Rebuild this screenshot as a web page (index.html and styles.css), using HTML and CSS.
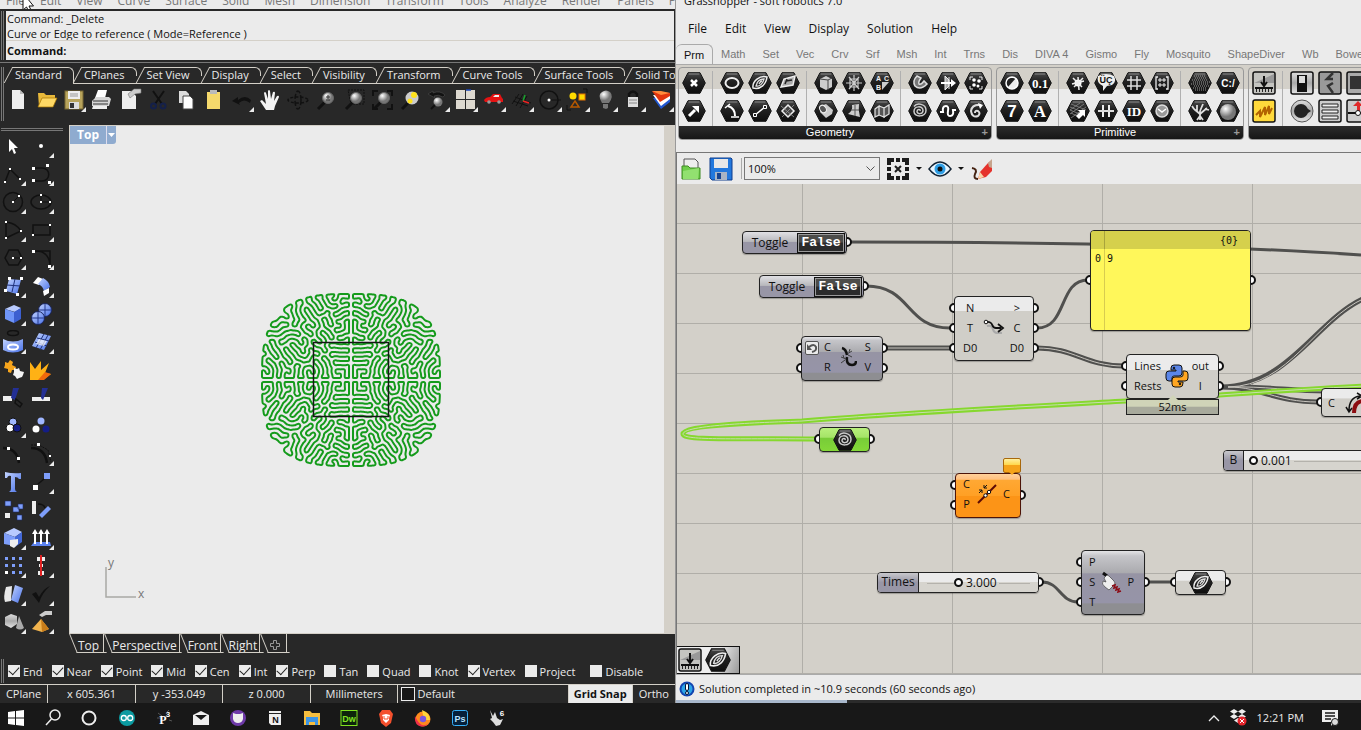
FILE: index.html
```html
<!DOCTYPE html>
<html lang="en">
<head>
<meta charset="utf-8">
<title>Rhino and Grasshopper</title>
<link rel="stylesheet" href="styles.css">
</head>
<body>
<svg class="defs" aria-hidden="true">
  <defs>
    <linearGradient id="gHex" x1="0" y1="0" x2="0" y2="1"><stop offset="0" stop-color="#4a4a4a"/><stop offset=".4" stop-color="#222"/><stop offset="1" stop-color="#0e0e0e"/></linearGradient>
    <linearGradient id="gBlue" x1="0" y1="0" x2="1" y2="1"><stop offset="0" stop-color="#c3d4ff"/><stop offset="1" stop-color="#4a72e8"/></linearGradient>
    <linearGradient id="gGrey" x1="0" y1="0" x2="0" y2="1"><stop offset="0" stop-color="#ddd"/><stop offset=".5" stop-color="#aaa"/><stop offset="1" stop-color="#e4e4e4"/></linearGradient>
    <radialGradient id="gBall" cx=".35" cy=".3"><stop offset="0" stop-color="#fff"/><stop offset="1" stop-color="#777"/></radialGradient>
    <symbol id="hex" viewBox="0 0 24 22"><path d="M6 .7h12l5.300 10.300-5.300 10.300H6L.7 11z" fill="url(#gHex)" stroke="#151515"/><path d="M6.700 2h10.600" stroke="#888"/></symbol>
    <symbol id="spiral" viewBox="0 0 24 22"><path d="M12 11c1-2-3-2-3 .5 0 3 6 3 6-1 0-5-9-5-9 1 0 6 12 6 12-1 0-7-9-8-12-4" fill="none" stroke="#ccc" stroke-width="1.500"/></symbol>
    <symbol id="curve" viewBox="0 0 24 22"><path d="M5 16C4 9 12 3 19 5c-1 7-6 13-14 11z" fill="none" stroke="#eee" stroke-width="1.500"/><path d="M8 14c1-5 4-7 8-7-1 4-4 8-8 7zM11 12c1-2 2-3 3-3" fill="none" stroke="#ddd" stroke-width="1.300"/></symbol>
    <symbol id="glass" viewBox="0 0 24 24"><path d="M4 21l7-7" stroke="#111" stroke-width="3"/><circle cx="14" cy="10" r="5.500" fill="url(#gBall)" stroke="#666"/></symbol>
    <symbol id="sink" viewBox="0 0 24 24"><rect x="1" y="1" width="22" height="22" rx="2" fill="#c4c4c0" stroke="#111" stroke-width="1.500"/><path d="M2 12L22 3v9z" fill="#999"/><path d="M12 5v9M9 11l3 4 3-4" stroke="#111" stroke-width="2" fill="none"/><path d="M3 17h18" stroke="#111" stroke-width="2"/><path d="M4 19.500h17" stroke="#222" stroke-width="3" stroke-dasharray="1 2"/></symbol>
  </defs>
</svg>

<main class="desktop">
<section class="rhino">
  <nav class="rhino-menu">
    <a href="#">File</a><a href="#">Edit</a><a href="#">View</a><a href="#">Curve</a><a href="#">Surface</a><a href="#">Solid</a><a href="#">Mesh</a><a href="#">Dimension</a><a href="#">Transform</a><a href="#">Tools</a><a href="#">Analyze</a><a href="#">Render</a><a href="#">Panels</a><a href="#">Paneling</a>
    <svg class="cursor" width="14" height="14"><path d="M1-7v17l3.500-3 3 6 2.500-1-3-6h4.500z" fill="#fff" stroke="#111"/></svg>
  </nav>
  <div class="command">
    <div class="history"><p>Command: _Delete</p><p>Curve or Edge to reference ( Mode=Reference )</p></div>
    <label class="prompt">Command:<input type="text"></label>
  </div>
  <div class="toolset">
    <div class="tool-tabs">
      <button class="on">Standard</button><button>CPlanes</button><button>Set View</button><button>Display</button><button>Select</button><button>Visibility</button><button>Transform</button><button>Curve Tools</button><button>Surface Tools</button><button>Solid Tools</button>
    </div>
    <div class="toolbar">
      <button aria-label="New"><svg viewBox="0 0 24 24"><path d="M6 2h8l4 4v15H6z" fill="#eee"/><path d="M14 2v4h4" fill="#bbb"/></svg></button>
      <button aria-label="Open"><svg viewBox="0 0 24 24"><path d="M4 5h6l2 2h9v4H8l-3 8z" fill="#e9b93a"/><path d="M4 19l4-9h15l-4 9z" fill="#ffd965" stroke="#a87400" stroke-width=".7"/></svg></button>
      <button class="more" aria-label="Save"><svg viewBox="0 0 24 24"><rect x="3" y="3" width="18" height="18" fill="#b8a45c" stroke="#776633"/><path d="M6 3h12v8H6z" fill="#eee"/><path d="M8 6h8M8 8h8" stroke="#999"/><path d="M7 14h10v7H7z" fill="#ddd"/><path d="M8 15h4v5H8z" fill="#333"/></svg></button>
      <button aria-label="Print"><svg viewBox="0 0 24 24"><path d="M8 2h9l-2 8H5z" fill="#fff"/><path d="M2 13l4-4h13l2 2-2 7H2z" fill="#d6d6d6"/><path d="M3 13h15M3 16h15" stroke="#333"/><path d="M3 18h14v3H2z" fill="#eee"/></svg></button>
      <button aria-label="Properties"><svg viewBox="0 0 24 24"><path d="M4 3h9l5 5v13H4z" fill="#eee"/><path d="M10 6l6-5h7v4l-6 1-5 4z" fill="#ccc" stroke="#777" stroke-width=".6"/></svg></button>
      <button aria-label="Cut"><svg viewBox="0 0 24 24"><path d="M7 3l9 13M18 3L9 16" stroke="#111" stroke-width="2"/><g fill="none" stroke="#14204a" stroke-width="2"><circle cx="7.500" cy="18" r="2.500"/><circle cx="17" cy="18" r="2.500"/></g></svg></button>
      <button aria-label="Copy"><svg viewBox="0 0 24 24"><path d="M5 3h7l3 3v9H5z" fill="#ddd"/><path d="M9 8h7l3 3v10H9z" fill="#fff" stroke="#444"/></svg></button>
      <button aria-label="Paste"><svg viewBox="0 0 24 24"><rect x="5" y="4" width="13" height="17" fill="#f5d96c"/><rect x="8" y="2" width="7" height="4" fill="#bbb"/></svg></button>
      <button class="more" aria-label="Undo"><svg viewBox="0 0 24 24"><path d="M2 13l6-4v3q7-6 13 0l-1 3q-6-5-11 0l1 2z" fill="#111"/></svg></button>
      <button aria-label="Pan"><svg viewBox="0 0 24 24"><path d="M8 22l-6-9 2-1 4 4L6 5q1-2 2 0l2 6 0-8q1-2 2 0l1 8 2-7q2-1 2 1l-1 8 3-5q2-1 2 1l-4 9-1 4z" fill="#f4f4f4"/></svg></button>
      <button aria-label="Rotate view"><svg viewBox="0 0 24 24" fill="none" stroke="#111" stroke-width="1.500"><ellipse cx="12" cy="12" rx="10" ry="3" stroke-dasharray="3 2"/><ellipse cx="12" cy="12" rx="3" ry="9" stroke-dasharray="5 2"/></svg></button>
      <button aria-label="Zoom dynamic"><svg viewBox="0 0 24 24"><use href="#glass"/><path d="M12 9h4M12 12h4M14 7v4" stroke="#333"/></svg></button>
      <button aria-label="Zoom window"><svg viewBox="0 0 24 24"><path d="M6 2h16v14H9z" fill="none" stroke="#111" stroke-dasharray="2 1"/><use href="#glass"/></svg></button>
      <button aria-label="Zoom extents"><svg viewBox="0 0 24 24"><path d="M3 8V3h5M17 3h5v5M22 16v5h-5M8 21H3v-5" fill="none" stroke="#111" stroke-width="2"/><use href="#glass"/></svg></button>
      <button aria-label="Zoom selected"><svg viewBox="0 0 24 24"><use href="#glass"/><circle cx="14" cy="10" r="6.500" fill="#ccc"/><circle cx="16" cy="7" r="3" fill="#ffe21c"/><circle cx="12" cy="13" r="2.500" fill="#ffe21c"/></svg></button>
      <button class="more" aria-label="Undo view"><svg viewBox="0 0 24 24"><path d="M2 6l5-3v2q7-3 12 2l-2 2Q12 6 8 8l1 2z" fill="#111" stroke="#555" stroke-width=".5"/><circle cx="12" cy="14" r="4.500" fill="url(#gBall)"/><path d="M5 21l4-4" stroke="#111" stroke-width="2"/></svg></button>
      <button class="more" aria-label="Four views"><svg viewBox="0 0 24 24"><path d="M2 2h9v9H2zM12 2h9v9h-9zM2 12h9v9H2zM12 12h9v9h-9z" fill="#ddd9d0"/><path d="M12 2h5" stroke="#1a45b8" stroke-width="1.500"/></svg></button>
      <button class="more" aria-label="Named view"><svg viewBox="0 0 24 24"><path d="M2 12q2-3 6-3l3-3h7l2 4 1 1v3H3z" fill="#e51313"/><path d="M11 9l2-2h4v2z" fill="#eee"/><circle cx="7" cy="14" r="1.800" fill="#999"/><circle cx="17" cy="14" r="1.800" fill="#999"/></svg></button>
      <button class="more" aria-label="Construction plane"><svg viewBox="0 0 24 24"><path d="M2 16L9 6M6 18l7-12M10 20l7-12M3 13l15 5M5 9l16 6" stroke="#111"/><path d="M13 13l2-6" stroke="#18a52c" stroke-width="1.500"/><path d="M13 13l6 2" stroke="#e22" stroke-width="1.500"/></svg></button>
      <button class="more" aria-label="Object snap"><svg viewBox="0 0 24 24"><circle cx="11" cy="12" r="9" fill="none" stroke="#111" stroke-width="1.500"/><path d="M11 12h12" stroke="#111"/><circle cx="11" cy="12" r="1.500" fill="#fff"/></svg></button>
      <button class="more" aria-label="Select"><svg viewBox="0 0 24 24"><circle cx="7" cy="8" r="3.500" fill="#ffda00"/><rect x="13" y="6" width="6" height="6" fill="#ffda00" stroke="#e87500"/><path d="M9 13l4 6H5z" fill="none" stroke="#b55800" stroke-width="1.500"/><path d="M1 17v5h4M17 1h4v4" fill="none" stroke="#111"/></svg></button>
      <button class="more" aria-label="Show objects"><svg viewBox="0 0 24 24"><path d="M8 15q-5-8 0-11 4-3 8 0 4 4-1 11z" fill="url(#gBall)"/><path d="M9 16h5v4l-2 1-3-1z" fill="#777"/></svg></button>
      <button class="more" aria-label="Lock"><svg viewBox="0 0 24 24"><path d="M7 10V6q4-5 8 0v4" fill="none" stroke="#111" stroke-width="2.500"/><rect x="6" y="9" width="10" height="10" fill="#ddd"/><path d="M7 12h8M7 15h8" stroke="#888"/></svg></button>
      <button class="more" aria-label="Layers"><svg viewBox="0 0 24 24"><path d="M3 10l8 11 9-7V9z" fill="#2056d0"/><path d="M3 7l8 11 9-7V8z" fill="#fff"/><path d="M2 3l8 11 10-6V5z" fill="#e2350e"/><path d="M2 3l9 4 9-2-9-2z" fill="#ff8a3c"/></svg></button>
    </div>
  </div>

  <div class="work">
    <div class="side">
      <button aria-label="Pointer"><svg viewBox="0 0 24 24"><path d="M7 5v13l3-3 2 5 2-1-2-5h4z" fill="#fff"/></svg></button>
      <button class="more" aria-label="Point"><svg viewBox="0 0 24 24"><circle cx="11" cy="12" r="2" fill="#fff"/></svg></button>
      <button class="more" aria-label="Polyline"><svg viewBox="0 0 24 24"><path d="M3 20L8 7l10 10" fill="none" stroke="#111" stroke-width="1.500"/><path d="M2 19h2v2H2zM7 6h2v2H7zM17 16h2v2h-2z" fill="#fff"/></svg></button>
      <button class="more" aria-label="Curve"><svg viewBox="0 0 24 24"><path d="M3 6h9c9 0 9 13 0 13H3" fill="none" stroke="#111" stroke-width="1.500"/><path d="M2 5h3v3H2zM16 2h3v3h-3zM2 17h3v3H2zM18 19h3v3h-3z" fill="#fff"/></svg></button>
      <button class="more" aria-label="Circle"><svg viewBox="0 0 24 24"><circle cx="11" cy="12" r="9.500" fill="none" stroke="#111" stroke-width="1.500"/><path d="M11 12l6-6" stroke="#111"/><path d="M10 11h2v2h-2zM16 5h2v2h-2z" fill="#fff"/></svg></button>
      <button class="more" aria-label="Ellipse"><svg viewBox="0 0 24 24"><ellipse cx="11" cy="12" rx="10" ry="7" fill="none" stroke="#111" stroke-width="1.500"/><path d="M11 12V5M11 12h9" stroke="#111"/><path d="M10 11h2v2h-2zM10 4h2v2h-2zM19 11h2v2h-2z" fill="#fff"/></svg></button>
      <button class="more" aria-label="Arc"><svg viewBox="0 0 24 24"><path d="M4 4q10 1 15 9L4 20z" fill="none" stroke="#111" stroke-width="1.500"/><path d="M3 3h2v2H3zM18 12h2v2h-2zM3 19h2v2H3z" fill="#fff"/></svg></button>
      <button class="more" aria-label="Rectangle"><svg viewBox="0 0 24 24"><path d="M3 7h17v10H3z" fill="none" stroke="#111" stroke-width="1.500"/><path d="M19 6h2v2h-2zM2 16h2v2H2z" fill="#fff"/></svg></button>
      <button class="more" aria-label="Polygon"><svg viewBox="0 0 24 24"><path d="M7 4h9l4 8-4 7H7l-4-7z" fill="none" stroke="#111" stroke-width="1.500"/><path d="M11 12h8" stroke="#111"/><path d="M10 11h2v2h-2zM18 11h2v2h-2z" fill="#fff"/></svg></button>
      <button class="more" aria-label="Fillet"><svg viewBox="0 0 24 24"><path d="M3 5h17v15M6 5q12 0 14 13" fill="none" stroke="#111" stroke-width="1.500"/><path d="M2 4h3v3H2zM18 19h3v3h-3z" fill="#fff"/></svg></button>
      <button class="more" aria-label="Surface from points"><svg viewBox="0 0 24 24"><path d="M7 5l12 1-4 14-11-3z" fill="url(#gBlue)"/><path d="M13 5l-3 13M5 11l13 1" stroke="#1d2f78"/><path d="M6 3h3v3H6zM18 3h3v3h-3zM2 15h3v3H2zM14 19h3v3h-3z" fill="#fff"/></svg></button>
      <button class="more" aria-label="Loft"><svg viewBox="0 0 24 24"><path d="M3 9l5-6 5 2-4 6z" fill="#fff"/><path d="M8 10l5-6q6 3 7 9l-6 4q-1-5-6-7z" fill="url(#gBlue)"/><path d="M13 17l6-3v5l-5 3z" fill="#fff"/></svg></button>
      <button class="more" aria-label="Box"><svg viewBox="0 0 24 24"><path d="M3 7l9-4 7 3-6 4z" fill="#b9cbff"/><path d="M3 7l9 3v11l-9-4z" fill="#6f95f8"/><path d="M12 10l7-4v11l-7 4z" fill="#3c5fd0"/></svg></button>
      <button class="more" aria-label="Boolean union"><svg viewBox="0 0 24 24"><circle cx="15" cy="8" r="6.500" fill="url(#gBlue)" stroke="#18245c"/><circle cx="8" cy="16" r="6.500" fill="url(#gBlue)" stroke="#18245c"/><path d="M9 8h13M2 16h12M8 10v12M15 2v12" stroke="#24398a"/></svg></button>
      <button class="more" aria-label="Project curves"><svg viewBox="0 0 24 24"><ellipse cx="11" cy="3" rx="5.500" ry="2.500" fill="none" stroke="#111" stroke-width="1.500"/><path d="M1 9q10 5 20 0v11q-10 5-20 0z" fill="url(#gBlue)"/><ellipse cx="11" cy="17" rx="5" ry="2.500" fill="none" stroke="#fff" stroke-width="2"/></svg></button>
      <button class="more" aria-label="Mesh"><svg viewBox="0 0 24 24"><path d="M9 3l12 3-7 14-12-4z" fill="url(#gBlue)"/><path d="M7 8l12 3M5 12l12 4M14 4L6 18M18 5l-8 15" stroke="#1d2f78"/><path d="M9 9l8 2-3 5-8-2z" fill="#fff" opacity=".7"/></svg></button>
      <button aria-label="Explode"><svg viewBox="0 0 24 24"><path d="M3 4l3 1 2-3 3 2-1 3 4 2-1 3-3 0-1 3-3-1 0-3-4-1 1-3z" fill="#f7a51c"/><path d="M12 10l3 1 2-1 1 3 4 1-1 3-1 2-3 1-2 1-2-3-2-1 1-3z" fill="#f4f4f4"/></svg></button>
      <button aria-label="Join"><svg viewBox="0 0 24 24"><path d="M0 22V4l5 7 6-8 0 9 8-7-4 10 6 1-8 6z" fill="#ffb115"/><path d="M8 22l7-8 6 2-7 6z" fill="#f06a0c"/></svg></button>
      <button aria-label="Trim"><svg viewBox="0 0 24 24"><path d="M1 10h9v5H1z" fill="#eee"/><path d="M11 2h6l-4 12-4-2z" fill="#232f94"/><path d="M14 13l6 5-2 3-5-4z" fill="none" stroke="#111" stroke-width="1.500"/></svg></button>
      <button aria-label="Split"><svg viewBox="0 0 24 24"><path d="M2 11h18v4H2z" fill="#eee"/><path d="M12 2h6l-5 12-2-2z" fill="#232f94"/></svg></button>
      <button class="more" aria-label="Group"><svg viewBox="0 0 24 24"><circle cx="11" cy="8" r="4" fill="#9fb6ff" stroke="#111"/><circle cx="8" cy="14" r="4" fill="#fff" stroke="#111"/><circle cx="15" cy="14" r="4" fill="#141d86" stroke="#111"/></svg></button>
      <button aria-label="Ungroup"><svg viewBox="0 0 24 24"><circle cx="11" cy="7" r="3.500" fill="#9fb6ff"/><circle cx="6" cy="15" r="3.500" fill="#fff"/><circle cx="16" cy="15" r="3.500" fill="#141d86"/></svg></button>
      <button aria-label="Edit points"><svg viewBox="0 0 24 24"><path d="M1 6q14 0 16 15" fill="none" stroke="#111" stroke-width="2.500"/><path d="M5 5h3v3H5zM15 15h3v3h-3z" fill="#fff"/></svg></button>
      <button class="more" aria-label="Control points"><svg viewBox="0 0 24 24"><path d="M1 6q14 0 16 15" fill="none" stroke="#111" stroke-width="2.500"/><path d="M1 3h8l9 5 3 12" fill="none" stroke="#111" stroke-dasharray="2 1"/><path d="M7 1h3v3H7zM19 13h2v2h-2z" fill="#fff"/></svg></button>
      <button aria-label="Text"><svg viewBox="0 0 24 24"><path d="M3 2q8 2 16 1v6h-2q-1-2-4-2v12q0 2 2 3H7q2-1 2-3V6Q6 5 5 8H3z" fill="url(#gBlue)"/></svg></button>
      <button class="more" aria-label="Move"><svg viewBox="0 0 24 24"><path d="M14 3h6v6h-6z" fill="#7e9efa"/><path d="M3 15h5v5H3z" fill="#fff"/><path d="M8 14l6-5" stroke="#111" stroke-width="1.500"/></svg></button>
      <button aria-label="Copy objects"><svg viewBox="0 0 24 24"><path d="M3 3h6v5H3zM16 6h5v5h-5zM11 9h6v5h-6zM15 17h5v5h-5z" fill="#7e9efa" stroke="#1b2a66" stroke-width=".6"/><path d="M3 15h5v5H3z" fill="#eee"/></svg></button>
      <button aria-label="Rotate"><svg viewBox="0 0 24 24"><path d="M2 3h4v13H2z" fill="#eee"/><path d="M18 8l3 3-9 9-3-3z" fill="#7e9efa"/><path d="M8 6q6 0 7 4" fill="none" stroke="#111" stroke-width="1.500"/></svg></button>
      <button class="more" aria-label="Solid edit"><svg viewBox="0 0 24 24"><path d="M2 7l10-5 8 4-7 5z" fill="#b9cbff"/><path d="M2 7l11 4v9l-11-2z" fill="#7e9efa"/><path d="M13 11l7-5v10l-7 5z" fill="#4368d8"/><path d="M8 14l8-1v5l-4 4-4-2z" fill="#eee"/></svg></button>
      <button class="more" aria-label="Extrude"><svg viewBox="0 0 24 24"><path d="M4 16h16l1 4H1z" fill="#5c83f0"/><path d="M5 18V5M11 18V5M17 18V5" stroke="#fff" stroke-width="2"/><path d="M2 8l3-5 3 5zM8 8l3-5 3 5zM14 8l3-5 3 5z" fill="#fff"/></svg></button>
      <button class="more" aria-label="Array"><svg viewBox="0 0 24 24"><path d="M3 3h3v3H3zM10 3h3v3h-3zM17 3h3v3h-3zM3 10h3v3H3zM10 10h3v3h-3zM17 10h3v3h-3zM10 17h3v3h-3zM17 17h3v3h-3z" fill="#7e9efa"/><path d="M3 17h3v3H3z" fill="#fff"/></svg></button>
      <button class="more" aria-label="Align"><svg viewBox="0 0 24 24"><path d="M7 3h8v4H7zM9 10h4v3H9zM8 17h6v4H8z" fill="#eee"/><path d="M11 1v21" stroke="#e12222" stroke-width="2"/></svg></button>
      <button class="more" aria-label="Flow"><svg viewBox="0 0 24 24"><path d="M4 5l6-1-1 15-6 1q-2-5 1-15z" fill="#e8e8e8"/><path d="M13 3l8 3-5 15-7-3z" fill="url(#gBlue)"/></svg></button>
      <button class="more" aria-label="Check"><svg viewBox="0 0 24 24"><path d="M2 12l4-2 3 5Q14 6 20 4q-8 7-11 17z" fill="#111"/></svg></button>
      <button class="more" aria-label="Primitives"><svg viewBox="0 0 24 24"><path d="M3 7l6-3 6 2v8l-6 4-6-3z" fill="url(#gGrey)"/><path d="M17 6l5 12q-4 3-8 0z" fill="#aaa"/></svg></button>
      <button class="more" aria-label="Properties picker"><svg viewBox="0 0 24 24"><path d="M11 9l8 10-7 3-10-3z" fill="#f2b44e"/><path d="M11 9l8 10-7 3z" fill="#c97d1a"/><path d="M9 5l6-4h7v4h-6l-4 2z" fill="#ccc"/></svg></button>
    </div>

    <div class="viewport">
      <button class="view-title"><span>Top</span><svg width="9" height="18" viewBox="0 0 9 18"><path d="M1 7h7l-3.500 4z" fill="#fff"/></svg></button>
      <svg class="model" width="190" height="184" viewBox="-95 -92 190 184">
        <g id="growth" fill="none" stroke="#159b1c" stroke-width="2" stroke-linejoin="round"><path id="quarter" d=""/><use href="#quarter" transform="scale(-1 1)"/><use href="#quarter" transform="scale(1 -1)"/><use href="#quarter" transform="scale(-1 -1)"/></g>
        <rect x="-37.500" y="-37.500" width="75" height="74" fill="none" stroke="#151515" stroke-width="1.500"/>
      </svg>
      <svg class="axes" width="46" height="44" viewBox="0 0 46 44"><path d="M1 12v30h30" fill="none" stroke="#a9a9a5" stroke-width="1.500"/><text x="3" y="12">y</text><text x="33" y="43">x</text></svg>
    </div>
  </div>

  <div class="view-tabs"><button>Top</button><button>Perspective</button><button>Front</button><button>Right</button><button aria-label="New view"><svg width="10" height="10" viewBox="0 0 10 10"><path d="M3.500.5h3v3h3v3h-3v3h-3v-3h-3v-3h3z" fill="none" stroke="#999"/></svg></button></div>

  <div class="osnap">
    <label><input type="checkbox" checked>End</label><label><input type="checkbox" checked>Near</label><label><input type="checkbox" checked>Point</label><label><input type="checkbox" checked>Mid</label><label><input type="checkbox" checked>Cen</label><label><input type="checkbox" checked>Int</label><label><input type="checkbox" checked>Perp</label><label><input type="checkbox">Tan</label><label><input type="checkbox">Quad</label><label><input type="checkbox">Knot</label><label><input type="checkbox" checked>Vertex</label><label><input type="checkbox">Project</label><label class="apart"><input type="checkbox">Disable</label>
  </div>
  <div class="rhino-status">
    <span class="cplane">CPlane</span><span>x 605.361</span><span>y -353.049</span><span>z 0.000</span><span>Millimeters</span><span class="layer"><i></i>Default</span><button class="snap">Grid Snap</button><button class="ortho">Ortho</button>
  </div>
</section>

<section class="gh">
  <div class="gh-title">Grasshopper - soft robotics 7.0</div>
  <nav class="gh-menu"><a href="#">File</a><a href="#">Edit</a><a href="#">View</a><a href="#">Display</a><a href="#">Solution</a><a href="#">Help</a></nav>
  <div class="gh-tabs"><button class="on">Prm</button><button>Math</button><button>Set</button><button>Vec</button><button>Crv</button><button>Srf</button><button>Msh</button><button>Int</button><button>Trns</button><button>Dis</button><button>DIVA 4</button><button>Gismo</button><button>Fly</button><button>Mosquito</button><button>ShapeDiver</button><button>Wb</button><button>Bowerbird</button></div>
  <div class="ribbon">
    <div class="group">
      <div class="icons">
        <div class="set">
          <button aria-label="Point"><svg viewBox="0 0 24 22"><use href="#hex"/><path d="M9 8l6 6M15 8l-6 6" stroke="#fff" stroke-width="2.500"/></svg></button>
          <button aria-label="Vector"><svg viewBox="0 0 24 22"><use href="#hex"/><path d="M7 16l6-6" stroke="#fff" stroke-width="3"/><path d="M10 6h7v7z" fill="#fff"/></svg></button>
        </div>
        <div class="set">
          <button aria-label="Circle"><svg viewBox="0 0 24 22"><use href="#hex"/><ellipse cx="12" cy="11" rx="6.500" ry="5" fill="none" stroke="#eee" stroke-width="2"/></svg></button>
          <button aria-label="Circular arc"><svg viewBox="0 0 24 22"><use href="#hex"/><path d="M8 6q7 2 7 10" fill="none" stroke="#fff" stroke-width="2"/><path d="M5 8l5-4M11 17h8" stroke="#fff" stroke-width="1.500"/></svg></button>
          <button aria-label="Curve"><svg viewBox="0 0 24 22"><use href="#hex"/><use href="#curve"/></svg></button>
          <button aria-label="Line"><svg viewBox="0 0 24 22"><use href="#hex"/><path d="M7 15l10-8" stroke="#fff" stroke-width="1.500"/><path d="M5.500 13.500h3v3h-3zM15.500 5.500h3v3h-3z" fill="#222" stroke="#fff"/></svg></button>
          <button aria-label="Plane"><svg viewBox="0 0 24 22"><use href="#hex"/><path d="M5 15L8 7l11-3-2 9z" fill="#aaa" stroke="#eee" stroke-width="1.500"/><path d="M9 12l2-5M10 9l6-1" stroke="#222" stroke-width="1.500"/></svg></button>
          <button aria-label="Rectangle"><svg viewBox="0 0 24 22"><use href="#hex"/><path d="M12 5l6 6-6 6-6-6z" fill="#444" stroke="#eee" stroke-width="1.500"/><path d="M5 6l13 11M18 5L6 17" stroke="#999" stroke-width=".8"/></svg></button>
        </div>
        <div class="set">
          <button aria-label="Box"><svg viewBox="0 0 24 22"><use href="#hex"/><path d="M6 7l6-3 6 3v8l-6 3-6-3z" fill="#ccc"/><path d="M6 7l8 1 4-2M14 8v10" stroke="#444" fill="none"/></svg></button>
          <button aria-label="Brep"><svg viewBox="0 0 24 22"><use href="#hex"/><path d="M7 6l5-2 7 6-1 4-6 4-6-6z" fill="#ccc"/><ellipse cx="9" cy="9" rx="3" ry="4" fill="#555" stroke="#eee" transform="rotate(-35 9 9)"/></svg></button>
          <button aria-label="Mesh"><svg viewBox="0 0 24 22"><use href="#hex"/><path d="M12 3v16M4 11h16M7 5l10 12M17 5L7 17M8 7h8v8H8z" fill="none" stroke="#ccc" stroke-width="1.200"/></svg></button>
          <button aria-label="Surface"><svg viewBox="0 0 24 22"><use href="#hex"/><path d="M10 5l7-1q-1 6 1 13L6 14q5-3 4-9z" fill="#ccc"/><path d="M13 5v11M9 10h8" stroke="#555"/></svg></button>
          <button aria-label="Subdivision mesh"><svg viewBox="0 0 24 22"><use href="#hex"/><g class="abc"><text x="6" y="9">A</text><text x="14" y="9">C</text><text x="6" y="18">B</text></g><path d="M12 10h7l-7 8z" fill="#ccc"/></svg></button>
          <button aria-label="Twisted box"><svg viewBox="0 0 24 22"><use href="#hex"/><path d="M5 9l4-3v9l-4 2zM9 6l5 2v9l-5-2M14 8l5-3v9l-5 3z" fill="#555" stroke="#ddd" stroke-width="1.300"/></svg></button>
        </div>
        <div class="set">
          <button aria-label="Field"><svg viewBox="0 0 24 22"><use href="#hex"/><path d="M9 4q-5 5-2 10 5 5 12-2l-3-3q-3 4-5 3-1-2 2-6z" fill="#777" stroke="#ddd" stroke-width="1.500"/></svg></button>
          <button aria-label="Spiral"><svg viewBox="0 0 24 22"><use href="#hex"/><use href="#spiral"/></svg></button>
          <button aria-label="Transform"><svg viewBox="0 0 24 22"><use href="#hex"/><path d="M9 4l4 4v6l-4 4zM13 5v12" fill="#aaa" stroke="#eee"/><path d="M5 11h10" stroke="#fff" stroke-width="2"/><path d="M15 7l5 4-5 4z" fill="#fff"/></svg></button>
          <button aria-label="Wave"><svg viewBox="0 0 24 22"><use href="#hex"/><path d="M4 12h3Q6 6 10 6q3 0 2 5-1 5 2 5 4 0 3-6h3" fill="none" stroke="#fff" stroke-width="2"/></svg></button>
          <button aria-label="Geometry group"><svg viewBox="0 0 24 22"><use href="#hex"/><path d="M6 8V5h3M15 5h3v3M18 14v3h-3M9 17H6v-3" fill="none" stroke="#eee"/><circle cx="10" cy="8" r="1.800" fill="#fff"/><circle cx="15" cy="9" r="1.800" fill="#fff"/><circle cx="10" cy="13" r="1.800" fill="#fff"/><circle cx="14" cy="14" r="1.500" fill="#fff"/></svg></button>
          <button aria-label="Loop"><svg viewBox="0 0 24 22"><use href="#hex"/><path d="M17 5Q8 4 7 11q1 7 7 5 3-3 0-5-3-1-3 2" fill="none" stroke="#ddd" stroke-width="2"/><path d="M14 3l5 2-3 4z" fill="#fff"/></svg></button>
        </div>
      </div>
      <div class="caption">Geometry<b>+</b></div>
    </div>
    <div class="group">
      <div class="icons">
        <div class="set">
          <button aria-label="Boolean"><svg viewBox="0 0 24 22"><use href="#hex"/><circle cx="12" cy="11" r="6" fill="#eee"/><path d="M8 15a6 6 0 0 1 0-9l8 0z" fill="#222"/><circle cx="12" cy="11" r="6" fill="none" stroke="#fff" stroke-width="1.500"/></svg></button>
          <button aria-label="Integer"><svg viewBox="0 0 24 22"><use href="#hex"/><text x="12" y="17" class="glyph big">7</text></svg></button>
          <button aria-label="Number"><svg viewBox="0 0 24 22"><use href="#hex"/><text x="12" y="16" class="glyph serif">0.1</text></svg></button>
          <button aria-label="Text"><svg viewBox="0 0 24 22"><use href="#hex"/><text x="12" y="17" class="glyph serif big">A</text></svg></button>
        </div>
        <div class="set">
          <button aria-label="Colour"><svg viewBox="0 0 24 22"><use href="#hex"/><circle cx="12" cy="11" r="3.500" fill="#fff"/><path d="M12 5l1 13M7 6l9 9M17 6L8 15M6 12l12-3" stroke="#eee" stroke-width="1.500"/></svg></button>
          <button aria-label="Domain square"><svg viewBox="0 0 24 22"><use href="#hex"/><path d="M5 4l15 6M4 7l15 6M4 10l12 5M5 13l8 4M4 10L14 3M4 14L18 4M5 18L20 7" stroke="#888" stroke-width=".8"/><path d="M10 16l4-4-2-2h7v7l-2-2-4 4z" fill="#fff"/></svg></button>
          <button aria-label="Culture"><svg viewBox="0 0 24 22"><use href="#hex"/><path d="M4 4q8-4 16 0 3 6-2 9l-5 1-4 5 0-5q-7-3-5-10z" fill="#eee"/><text x="12" y="11" class="ink">ÜÇ</text></svg></button>
          <button aria-label="Domain"><svg viewBox="0 0 24 22"><use href="#hex"/><path d="M9 5v12M15 5v12" stroke="#eee" stroke-width="2"/><path d="M4 11h16" stroke="#ddd" stroke-width="2"/></svg></button>
          <button aria-label="Data grid"><svg viewBox="0 0 24 22"><use href="#hex"/><path d="M9 4v14M15 4v14M5 8h14M5 14h14" stroke="#ddd" stroke-width="1.500"/></svg></button>
          <button aria-label="Guid"><svg viewBox="0 0 24 22"><use href="#hex"/><text x="12" y="16" class="glyph serif">ID</text></svg></button>
          <button aria-label="Matrix"><svg viewBox="0 0 24 22"><use href="#hex"/><path d="M8 5H6v12h2M16 5h2v12h-2" fill="none" stroke="#eee" stroke-width="1.300"/><path d="M9 7h2v2H9zM13 7h2v2h-2zM9 12h2v2H9zM13 12h2v2h-2z" fill="none" stroke="#eee"/></svg></button>
          <button aria-label="Time"><svg viewBox="0 0 24 22"><use href="#hex"/><circle cx="12" cy="11" r="6" fill="#999" stroke="#ddd" stroke-width="1.500"/><path d="M8 9l4 3 4-3" stroke="#fff" fill="none" stroke-width="1.500"/></svg></button>
        </div>
        <div class="set">
          <button aria-label="Shader"><svg viewBox="0 0 24 22"><use href="#hex"/><path d="M6 4h12M4 8h16M3 12h18M5 16h14" stroke="#999" stroke-dasharray="1 1"/><path d="M7 6h12M5 10h17M6 14h15M7 18h11" stroke="#999" stroke-dasharray="1 1"/></svg></button>
          <button aria-label="Data path"><svg viewBox="0 0 24 22"><use href="#hex"/><path d="M12 20v-9M12 14L6 9M12 14l7-6M9 11V5M12 11l3-7M6 9L4 6M17 9l4 1M9 20l3-4 3 4" stroke="#ddd" stroke-width="1.800" fill="none"/></svg></button>
          <button aria-label="File path"><svg viewBox="0 0 24 22"><use href="#hex"/><text x="12" y="15" class="glyph">C:/</text></svg></button>
          <button aria-label="Material"><svg viewBox="0 0 24 22"><use href="#hex"/><circle cx="12" cy="12" r="8" fill="url(#gBall)"/></svg></button>
        </div>
      </div>
      <div class="caption">Primitive<b>+</b></div>
    </div>
    <div class="group wide">
      <div class="icons">
        <div class="set">
          <button aria-label="Data dam"><svg viewBox="0 0 24 24"><use href="#sink"/></svg></button>
          <button aria-label="Panel"><svg viewBox="0 0 24 24"><rect x="1" y="1" width="22" height="22" rx="2" fill="#ffd93b" stroke="#111" stroke-width="1.500"/><path d="M4 16l4-4v6l5-10v8l4-9v8l3-6" fill="none" stroke="#b36200" stroke-width="2"/></svg></button>
        </div>
        <div class="set">
          <button aria-label="Toggle"><svg viewBox="0 0 24 24"><rect x="1" y="1" width="22" height="22" rx="2" fill="url(#gGrey)" stroke="#111" stroke-width="1.500"/><path d="M7 4h10v17H7z" fill="#111"/><path d="M9 5h6v7H9z" fill="#ddd"/></svg></button>
          <button aria-label="Knob"><svg viewBox="0 0 24 24"><circle cx="12" cy="12" r="11" fill="url(#gGrey)" stroke="#555"/><circle cx="11" cy="12" r="7" fill="#222"/><path d="M15 8l6 4-6 4z" fill="#222"/></svg></button>
          <button aria-label="Graph mapper"><svg viewBox="0 0 24 24"><rect x="1" y="1" width="22" height="22" rx="2" fill="#999" stroke="#111" stroke-width="1.500"/><path d="M15 2l-6 6h6M15 12l-5 3 5 7" fill="none" stroke="#333" stroke-width="2.500"/></svg></button>
          <button aria-label="Value list"><svg viewBox="0 0 24 24"><rect x="1" y="1" width="22" height="22" rx="2" fill="#ccc" stroke="#111" stroke-width="1.500"/><path d="M4 5h16v3H4zM4 11h16v3H4zM4 17h16v3H4z" fill="#eee" stroke="#222"/></svg></button>
          <button aria-label="Screen"><svg viewBox="0 0 24 24"><rect x="1" y="1" width="22" height="22" rx="2" fill="#aaa" stroke="#111" stroke-width="1.500"/><rect x="4" y="5" width="16" height="13" fill="#333"/></svg></button>
          <button aria-label="Gumball"><svg viewBox="0 0 24 24"><rect x="1" y="1" width="22" height="22" rx="2" fill="#ccc" stroke="#111" stroke-width="1.500"/><path d="M11 12V7H7l5-5 5 5h-3v5z" fill="#e02a2a"/><path d="M2 14h20" stroke="#111" stroke-width="2"/><circle cx="12" cy="14" r="2.500" fill="#fff" stroke="#111"/></svg></button>
        </div>
      </div>
      <div class="caption"></div>
    </div>
  </div>

  <div class="gh-toolbar">
    <button aria-label="Open file"><svg viewBox="0 0 24 24"><path d="M5 2h11l3 3v9H5z" fill="#eee" stroke="#555"/><path d="M3 9h6l2 2h10v11H3z" fill="#6fce4b" stroke="#3f8a22"/><path d="M4 14l16-3-1 11H4z" fill="#92e070"/></svg></button>
    <button aria-label="Save file"><svg viewBox="0 0 24 24"><path d="M1 1h21l1 1v21H3l-2-2z" fill="#2278dd" stroke="#0f3c8c"/><path d="M5 2h14v9H5z" fill="#e8e8e8"/><path d="M6 15h12v8H6z" fill="#a8b4c4"/><path d="M8 16h4v6H8z" fill="#164391"/></svg></button>
    <i class="sep"></i>
    <select aria-label="Zoom"><option>100%</option></select>
    <button aria-label="Zoom extents"><svg viewBox="0 0 24 24"><path d="M3 8V3h5M10 3h4M16 3h5v5M21 10v4M21 16v5h-5M14 21h-4M8 21H3v-5M3 14v-4" fill="none" stroke="#1c1c1c" stroke-width="4"/><path d="M9 9l6 6M15 9l-6 6" stroke="#1c1c1c" stroke-width="2"/></svg></button>
    <button class="drop" aria-label="Zoom options"></button>
    <button aria-label="Preview"><svg viewBox="0 0 24 24"><path d="M1 12q11-14 22 0-11 14-22 0z" fill="#e9f6ff" stroke="#123" stroke-width="1.500"/><circle cx="12" cy="12" r="5.500" fill="#2f9fe6"/><circle cx="12" cy="12" r="2.500" fill="#111"/></svg></button>
    <button class="drop" aria-label="Preview options"></button>
    <button aria-label="Sketch"><svg viewBox="0 0 24 24"><path d="M2 11q6 1 3 6-2 5 3 5" fill="none" stroke="#421" stroke-width="2"/><path d="M10 15L18 6l4-3v11l-6 6-8 2z" fill="#e5322c"/><path d="M18 6l4-4v9l-3-1z" fill="#c7a48c"/><path d="M10 15l4 5-6 2z" fill="#f7d5a8"/></svg></button>
  </div>

  <div class="canvas">
    <svg class="wires" width="684" height="490" viewBox="677 184 684 490">
      <g fill="none">
        <path class="wire" d="M849 242C1010 242 1200 244 1361 255M866 286C912 286 905 328 950 328M1037 328C1068 328 1058 280 1088 280M1042 582C1060 582 1060 602 1078 602M1148 582h24"/>
        <path class="wire twin" d="M886 348h66M1037 348C1075 348 1085 366 1124 366M1221 387C1290 386 1315 320 1365 298M1221 387C1262 387 1275 402 1318 402M1221 387C1265 386 1290 391 1325 391"/>
        <path class="wire core" d="M886 348h66M1037 348C1075 348 1085 366 1124 366M1228 387C1290 386 1315 320 1365 298M1228 387C1262 387 1275 402 1318 402M1228 387C1265 386 1290 391 1325 391"/>
        <path class="live twin" d="M816 439C740 438 683 441 683 434 683 424 780 422 802 421 900 413 1000 408 1126 401 1200 397 1280 390 1365 386"/>
        <path class="live core" d="M816 439C740 438 683 441 683 434 683 424 780 422 802 421 900 413 1000 408 1126 401 1200 397 1280 390 1365 386"/>
      </g>
      <g class="ports">
        <circle cx="847" cy="242" r="4"/><circle cx="864" cy="286" r="4"/><circle cx="801" cy="348" r="4"/><circle cx="801" cy="368" r="4"/><circle cx="883" cy="348" r="4"/><circle cx="883" cy="368" r="4"/>
        <circle cx="954" cy="308" r="4"/><circle cx="954" cy="328" r="4"/><circle cx="954" cy="348" r="4"/><circle cx="1034" cy="308" r="4"/><circle cx="1034" cy="328" r="4"/><circle cx="1034" cy="348" r="4"/>
        <circle cx="1090" cy="280" r="4"/><circle cx="1251" cy="280" r="4"/><circle cx="1126" cy="366" r="4"/><circle cx="1126" cy="386" r="4"/><circle cx="1219" cy="366" r="4"/><circle cx="1219" cy="386" r="4"/>
        <circle cx="1321" cy="402" r="4"/><circle cx="819" cy="439" r="4"/><circle cx="870" cy="439" r="4"/><circle cx="955" cy="485" r="4"/><circle cx="955" cy="505" r="4"/><circle cx="1021" cy="495" r="4"/>
        <circle cx="1039" cy="582" r="4"/><circle cx="1081" cy="562" r="4"/><circle cx="1081" cy="582" r="4"/><circle cx="1081" cy="602" r="4"/><circle cx="1145" cy="582" r="4"/><circle cx="1175" cy="582" r="4"/><circle cx="1226" cy="582" r="4"/>
      </g>
    </svg>

    <div class="node toggle t1"><span>Toggle</span><button>False</button></div>
    <div class="node toggle t2"><span>Toggle</span><button>False</button></div>

    <div class="node violet explode">
      <div class="col"><span>C</span><span>R</span></div>
      <svg width="18" height="22" viewBox="0 0 18 22"><path d="M3 2q4 1 5 7M8 11q-1 8 5 8 4 0 4-4" fill="none" stroke="#111" stroke-width="2.500"/><path d="M8 8l5-3M9 9l4 2M10 6l1-3M7 13l-5-2M6 14l-4 3M5 12l-1-3" stroke="#333" stroke-width=".9"/></svg>
      <div class="col"><span>S</span><span>V</span></div>
      <i class="redo"><svg width="11" height="11" viewBox="0 0 11 11"><path d="M2 4q5-4 7 0 1 4-4 5" fill="none" stroke="#555" stroke-width="2"/><path d="M0 1v6h5z" fill="#555"/></svg></i>
    </div>

    <div class="node plain item">
      <div class="col"><span>N</span><span>T</span><span>D0</span></div>
      <svg width="22" height="18" viewBox="0 0 22 18"><path d="M3 4c8-2 4 7 10 7h5" fill="none" stroke="#aaa" stroke-width="2" transform="translate(1 3)"/><path d="M3 3c9-1 4 6 10 6h5" fill="none" stroke="#111" stroke-width="1.800"/><path d="M15 5l5 4-5 4" fill="none" stroke="#111" stroke-width="1.800"/><circle cx="3" cy="3" r="1.800" fill="#fff" stroke="#111"/></svg>
      <div class="col"><span>&gt;</span><span>C</span><span>D0</span></div>
    </div>

    <div class="node panel"><header>{0}</header><p><span>0</span><span>9</span></p></div>

    <div class="node plain python">
      <div class="col"><span>Lines</span><span>Rests</span></div>
      <svg width="24" height="24" viewBox="0 0 24 24" stroke="#111"><path d="M6 4q0-3 3-3h5q3 0 3 3v5q0 3-3 3H9q-2 0-2 2v3H4q-3 0-3-3v-4q0-3 3-3h7V6H6z" fill="#5b86e8"/><path d="M18 19q0 4-3 4h-5q-3 0-3-3v-4q0-3 3-3h5q3 0 3-2V7h2q3 0 3 3v4q0 3-3 3h-7v1h5z" fill="#ffa621"/><circle cx="9" cy="4" r=".8"/><circle cx="15" cy="20" r=".8"/></svg>
      <div class="col"><span>out</span><span>I</span></div>
    </div>
    <div class="timer">52ms</div>

    <div class="node param spiral-node"><svg viewBox="0 0 24 22" width="24" height="22"><use href="#hex"/><use href="#spiral"/></svg></div>
    <div class="node param curve-node"><svg viewBox="0 0 24 22" width="24" height="22"><use href="#hex"/><use href="#curve"/></svg></div>

    <div class="node plain fillet"><div class="col"><span>C</span></div><svg width="22" height="24" viewBox="0 0 22 24"><path d="M4 20Q4 6 15 5M1 16l3 5 3-4M12 2l5 3-5 3" fill="none" stroke="#111" stroke-width="1.500"/><path d="M9 22q0-11 8-12h5" fill="none" stroke="#8c0c10" stroke-width="4"/></svg></div>

    <div class="node slider bee"><span class="name">B</span><div><i></i><span>0.001</span><em></em></div></div>
    <div class="node slider times"><span class="name">Times</span><div><i></i><span>3.000</span><em></em></div></div>

    <div class="node warn">
      <div class="col"><span>C</span><span>P</span></div>
      <svg width="20" height="20" viewBox="0 0 20 20"><path d="M1 19L19 1" stroke="#5c0a05" stroke-width="2"/><path d="M2 9l3-3M2 6h3v3M10 4h-3V1M7 4l3-3" stroke="#111" fill="none"/><circle cx="8.500" cy="11.500" r="1.700" fill="#fff" stroke="#111"/><circle cx="12" cy="8" r="1.700" fill="#fff" stroke="#111"/></svg>
      <div class="col"><span>C</span></div>
    </div>
    <div class="balloon"></div>

    <div class="node violet hand">
      <div class="col"><span>P</span><span>S</span><span>T</span></div>
      <svg width="22" height="22" viewBox="0 0 22 22"><path d="M2 2l4 3" stroke="#111" stroke-width="3"/><path d="M3 7l3-3 2 1 5 5q2 2 0 4l-5 5-4-3q-4-3-2-6l3 1z" fill="#eee" stroke="#444" stroke-width=".7"/><path d="M11 15l3-1-1 3 3-1-1 3 3-1-1 3 3-1" fill="none" stroke="#8c0c16" stroke-width="1.500"/></svg>
      <div class="col"><span>P</span></div>
    </div>

    <div class="palette"><svg width="24" height="24" viewBox="0 0 24 24"><use href="#sink"/></svg><svg width="26" height="24" viewBox="0 0 24 22"><use href="#hex"/><use href="#curve"/></svg></div>
  </div>

  <div class="gh-status"><svg width="16" height="16" viewBox="0 0 16 16"><circle cx="8" cy="8" r="7.500" fill="#1244b0"/><circle cx="8" cy="8" r="5.500" fill="#2ba4e8"/><rect x="6.500" y="2.500" width="3" height="7" rx="1.500" fill="#fff" stroke="#013"/><circle cx="8" cy="12" r="1.500" fill="#fff" stroke="#013"/></svg>Solution completed in ~10.9 seconds (60 seconds ago)</div>
  <div class="under"><i></i></div>
</section>
</main>

<footer class="taskbar">
  <button aria-label="Start"><svg viewBox="0 0 20 20"><path d="M2 4l7-1v6.500H2zM10 3l8-1v7.500h-8zM2 10.500h7V17l-7-1zM10 10.500h8V18l-8-1z" fill="#fff"/></svg></button>
  <button aria-label="Search"><svg viewBox="0 0 20 20"><circle cx="12" cy="7" r="5" fill="none" stroke="#eee" stroke-width="1.500"/><path d="M8.500 11L3 17" stroke="#eee" stroke-width="1.500"/></svg></button>
  <button aria-label="Cortana"><svg viewBox="0 0 20 20"><circle cx="9" cy="10" r="6.500" fill="none" stroke="#eee" stroke-width="2"/></svg></button>
  <button aria-label="Arduino"><svg viewBox="0 0 20 20"><circle cx="10" cy="10" r="8" fill="#0b9aa0"/><circle cx="6.800" cy="10" r="2.500" fill="none" stroke="#fff" stroke-width="1.300"/><circle cx="13.200" cy="10" r="2.500" fill="none" stroke="#fff" stroke-width="1.300"/></svg></button>
  <button aria-label="Processing"><svg viewBox="0 0 20 20"><path d="M3 10h4M4 5l4 3M13 4l2-2M15 12l3 1" stroke="#555"/><text x="9" y="16" class="glyph p3">P</text><text x="14" y="9" class="glyph small">3</text></svg></button>
  <button aria-label="Mail"><svg viewBox="0 0 20 20"><path d="M2 7l8-4 8 4v10H2z" fill="#eee"/><path d="M4 7h12l-6 5z" fill="#181818"/></svg></button>
  <button aria-label="GitHub"><svg viewBox="0 0 20 20"><circle cx="10" cy="10" r="8" fill="#6e3aa8"/><path d="M5 5l3 1h4l3-1v6q-1 4-5 4t-5-4z" fill="#eee"/></svg></button>
  <button aria-label="Notion"><svg viewBox="0 0 20 20"><path d="M4 3h12v14H6l-2-2z" fill="#eee"/><path d="M4 5.500h12" stroke="#222"/><text x="10.500" y="15" class="ink">N</text></svg></button>
  <button aria-label="Explorer"><svg viewBox="0 0 20 20"><path d="M2 3h6l2 2h8v12H2z" fill="#f5bd3e"/><path d="M4 9h12v8h-3v-3H7v3H4z" fill="#3c94e4"/></svg></button>
  <button aria-label="Dreamweaver"><svg viewBox="0 0 20 20"><rect x="2" y="2.500" width="16" height="15" fill="#0d240b" stroke="#80e220"/><text x="10" y="14" class="glyph dw">Dw</text></svg></button>
  <button aria-label="Brave"><svg viewBox="0 0 20 20"><path d="M6 2h8l3 4-2 9-5 4-5-4L3 6z" fill="#f4502d"/><path d="M6 7l4-1 4 1-1 3 0 2-3 3-3-3V9z" fill="#fff"/><path d="M8 8v3h4V8" stroke="#f4502d" fill="none"/></svg></button>
  <button aria-label="Firefox"><svg viewBox="0 0 20 20"><circle cx="10" cy="11" r="7.500" fill="#ff8a1e"/><path d="M9 2q8 3 8 10h-6z" fill="#ffd43a"/><path d="M2 8q6 14 14 7-3 4-8 3.500Q1 17 2 8z" fill="#f0304a"/><circle cx="10" cy="11" r="3.200" fill="#7a55e0"/></svg></button>
  <button aria-label="Photoshop"><svg viewBox="0 0 20 20"><rect x="2.500" y="2.500" width="15" height="15" rx="2" fill="#06203a" stroke="#36b0f8"/><text x="10" y="14" class="glyph ps">Ps</text></svg></button>
  <button aria-label="Rhino"><svg viewBox="0 0 20 20"><path d="M3 2l3 6 2-4 2 6 3 2 3-1-3 6-4 1-3-4-3-3 2-1z" fill="#ddd"/><text x="15" y="8" class="glyph small">6</text></svg></button>
  <div class="tray">
    <svg width="12" height="8" viewBox="0 0 12 8"><path d="M1 7l5-5 5 5" fill="none" stroke="#eee" stroke-width="1.300"/></svg>
    <svg width="17" height="17" viewBox="0 0 17 17"><path d="M4 0l4 2.500L4 5 0 2.500zM12 0l4 2.500L12 5 8 2.500zM4 5l4 2.500L4 10 0 7.500zM12 5l4 2.500L12 10 8 7.500zM8 9l4 2.500L8 14l-4-2.500z" fill="#eee"/><circle cx="12" cy="12" r="4.500" fill="#e3242b"/><path d="M10 10l4 4M14 10l-4 4" stroke="#fff"/></svg>
    <time>12:21 PM</time>
    <svg class="note" width="17" height="17" viewBox="0 0 17 17"><path d="M0 1h16v12h-4l-3 4v-4H0z" fill="#eee"/><path d="M3 4h10M3 7h10M3 10h6" stroke="#181818" stroke-width="1.300"/><circle cx="13" cy="13" r="3.500" fill="#ddd" stroke="#181818"/></svg>
  </div>
</footer>
<script src="growth.js"></script>
</body>
</html>
```

FILE: styles.css
```css
* { box-sizing: border-box; }
body { margin: 0; height: 100vh; display: flex; flex-direction: column; overflow: hidden; background: #181818; font: 11px/15px "Open Sans", "Noto Sans", sans-serif; color: #111; }
button { border: 0; padding: 0; margin: 0; background: none; font: inherit; color: inherit; }
a { color: inherit; text-decoration: none; }
p { margin: 0; }
.defs { position: absolute; width: 0; height: 0; }
.desktop { flex: 1; min-height: 0; display: grid; grid-template-columns: minmax(0, 675fr) minmax(0, 686fr); }
.rhino, .gh { display: flex; flex-direction: column; min-width: 0; min-height: 0; overflow: hidden; }
.rhino { background: #282828; color: #ebebeb; }
.glyph { fill: #fff; font: 700 10px "Liberation Sans", sans-serif; text-anchor: middle; }
.glyph.serif { font: 700 13px "Liberation Serif", serif; }
.glyph.big { font-size: 17px; }
.glyph.small { font-size: 8px; }
.glyph.p3 { font: 700 12px "Liberation Serif", serif; }
.glyph.dw { fill: #80e220; font-size: 9px; }
.glyph.ps { fill: #b8e2ff; font-size: 9px; }
.ink { fill: #111; font: 700 9px "Liberation Sans", sans-serif; text-anchor: middle; }
.abc { fill: #eee; font: 700 7px "Liberation Sans", sans-serif; }

/* Modelling window */
.rhino-menu { position: relative; flex: none; height: 9px; overflow: hidden; display: flex; align-items: flex-end; gap: 15px; padding-left: 6px; background: #ebebeb; color: #777; line-height: 17px; white-space: nowrap; font-size: 12px; }
.cursor { position: absolute; left: 22px; top: 0; }
.command { flex: none; margin: 2px 1px 2px 1px; padding-left: 2px; border-left: 3px double #777; height: 49px; color: #111; }
.command > * { background: #ebebeb; }
.history { height: 29px; padding-left: 1px; white-space: nowrap; overflow: hidden; }
.prompt { display: flex; align-items: center; height: 20px; padding-left: 1px; border-top: 1px solid #d4d0c8; font-weight: 700; }
.prompt input { flex: 1; min-width: 0; border: 0; background: none; font: inherit; }
.toolset { flex: none; border-top: 1px solid #777; padding-top: 4px; height: 59px; overflow: hidden; background: linear-gradient(90deg, transparent 1px, #777 1px, #777 2px, transparent 2px, transparent 3px, #777 3px, #777 4px, transparent 4px) 0 4px / 100% 100% no-repeat; }
.tool-tabs { display: flex; height: 17px; padding-left: 5px; white-space: nowrap; }
.tool-tabs button { position: relative; flex: none; padding: 0 12px 0 10px; line-height: 16px; border-bottom: 1px solid #d4d0c8; }
.tool-tabs button.on { border-bottom-color: transparent; }
.tool-tabs button::before { content: ""; position: absolute; top: 0; bottom: 0; left: 3px; width: 60%; border: solid #d4d0c8; border-width: 1px 0 0 1px; transform: skewX(-28deg); }
.tool-tabs button::after { content: ""; position: absolute; top: 0; right: 0; width: 40%; height: 8px; border: solid #d4d0c8; border-width: 1px 1px 0 0; border-top-right-radius: 6px; }
.tool-tabs button.on::after { height: 16px; }
.toolbar { display: flex; gap: 4px; padding: 4px 0 0 6px; }
.toolbar button, .side button { position: relative; flex: none; width: 24px; height: 24px; }
.toolbar svg, .side svg { display: block; width: 24px; height: 24px; }
.more::after { content: ""; position: absolute; right: 0; bottom: 0; border-left: 5px solid transparent; border-bottom: 5px solid #ebebeb; }
.work { flex: 1; min-height: 0; display: flex; margin-top: 4px; }
.side { flex: none; width: 69px; display: grid; grid-template-columns: 24px 24px; grid-auto-rows: 24px; gap: 4px; align-content: start; padding: 6px 0 0 2px; background: linear-gradient(#777 1px, transparent 1px, transparent 2px, #777 2px, #777 3px, transparent 3px) 1px 0 / 62px 3px no-repeat; margin-top: 3px; }
.viewport { position: relative; flex: 1; min-width: 0; background: #ebebeb; border: solid #d4d0c8; border-width: 1px 11px 0 1px; overflow: hidden; }
.view-title { display: flex; height: 18px; background: #8fabcf; color: #fff; font-weight: 700; font-size: 12px; line-height: 18px; border-bottom-right-radius: 3px; }
.view-title span { padding: 0 7px; border-right: 1px solid #dde; }
.model { position: absolute; left: 186px; top: 162px; }
.axes { position: absolute; left: 35px; bottom: 34px; fill: #777; font-size: 12px; }
.view-tabs { flex: none; height: 22px; margin: 0 0 0 69px; border-top: 1px solid #d4d0c8; display: flex; font-size: 12px; }
.view-tabs button { position: relative; height: 19px; padding: 3px 4px 0 9px; border-right: 1px solid #d4d0c8; line-height: 15px; }
.view-tabs button:nth-child(n+2) { padding-right: 2px; padding-left: 8px; }
.view-tabs button:last-child { padding: 3px 6px 0 10px; }
.view-tabs button::before { content: ""; position: absolute; left: 4px; right: 0; top: 0; bottom: 0; border: solid #d4d0c8; border-width: 0 0 1px 1px; transform: skewX(22deg); }
.osnap { flex: none; height: 24px; margin: 4px 0 1px 1px; padding-left: 4px; border-left: 3px double #777; display: flex; align-items: center; gap: 9px; white-space: nowrap; }
.osnap label { display: flex; align-items: center; gap: 3px; }
.osnap .apart { margin-left: 6px; }
.osnap input { appearance: none; margin: 0; width: 12px; height: 12px; background: #ebebeb; display: grid; place-items: center; }
.osnap input:checked::before { content: ""; width: 9px; height: 5px; border: solid #222; border-width: 0 0 1px 1px; transform: rotate(-48deg) translate(1px, -1px); }
.rhino-status { flex: none; height: 19px; border-top: 1px solid #d4d0c8; display: flex; line-height: 18px; }
.rhino-status > * { flex: 88 1 0; text-align: center; border-right: 1px solid #d4d0c8; white-space: nowrap; min-width: 0; }
.rhino-status .cplane { flex-grow: 48; }
.rhino-status .layer { flex-grow: 169; display: flex; align-items: center; gap: 2px; padding-left: 3px; }
.layer i { width: 14px; height: 14px; border: 1px solid #ebebeb; background: #181818; }
.rhino-status .snap { flex-grow: 64; background: #ebebeb; color: #111; font-weight: 700; }
.rhino-status .ortho { flex-grow: 43; border: 0; }

/* Grasshopper window */
.gh { background: #ebebeb; border-left: 1px solid #999; }
.gh-title { flex: none; height: 9px; overflow: hidden; display: flex; align-items: flex-end; padding-left: 8px; line-height: 16px; }
.gh-menu { flex: none; height: 35px; padding: 4px 0 0 12px; display: flex; align-items: center; gap: 18px; font-size: 12px; }
.gh-tabs { flex: none; height: 21px; display: flex; gap: 17px; overflow: hidden; border-bottom: 1px solid #aaa; color: #777; font: 11px "Liberation Sans", sans-serif; white-space: nowrap; }
.gh-tabs button { flex: none; }
.gh-tabs .on { width: 37px; margin-right: -9px; border: solid #aaa; border-width: 1px 1px 0 0; border-radius: 6px 6px 0 0; color: #111; }
.ribbon { flex: none; height: 88px; padding: 2px 0 0 2px; display: flex; gap: 4px; overflow: hidden; border-bottom: 1px solid #777; background: linear-gradient(#d3d0c9 24px, #ebebeb 24px); }
.group { flex: none; height: 73px; border: 1px solid #999; border-radius: 4px; overflow: hidden; display: flex; flex-direction: column; }
.icons { flex: 1; display: flex; padding: 3px 3px 0; }
.set { display: grid; grid-auto-flow: column; grid-template-rows: 24px 24px; gap: 4px; }
.set + .set { padding-left: 7px; margin-left: 6px; border-left: 1px solid #b0b0b0; }
.set button { width: 24px; height: 24px; display: grid; place-items: center; }
.set svg { display: block; width: 24px; height: 24px; }
.caption { position: relative; height: 13px; background: linear-gradient(#2c2c2c, #161616); color: #fff; font: 11px/13px "Liberation Sans", sans-serif; text-align: center; padding-right: 10px; }
.caption b { position: absolute; right: 3px; color: #999; }
.wide { width: 320px; }
.gh-toolbar { flex: none; height: 31px; display: flex; align-items: center; padding-left: 2px; border-left: 1px solid #777; }
.gh-toolbar button { width: 24px; height: 24px; margin-right: 6px; }
.gh-toolbar svg { display: block; width: 24px; height: 24px; }
.gh-toolbar .sep { width: 1px; height: 21px; background: #aaa; margin: 0 2px; }
.gh-toolbar select { appearance: none; width: 136px; height: 23px; padding: 0 3px; margin-right: 6px; border: 1px solid #777; border-radius: 0; font: inherit; color: inherit; background: #ebebeb url("data:image/svg+xml,%3Csvg xmlns='http://www.w3.org/2000/svg' width='9' height='6'%3E%3Cpath d='M.5.5l4 4 4-4' fill='none' stroke='%23555'/%3E%3C/svg%3E") no-repeat right 4px center; }
.gh-toolbar .drop { width: 6px; margin-right: 6px; border: solid transparent; border-width: 3px 3px 0; border-top-color: #111; height: 3px; }

/* Node canvas */
.canvas { position: relative; flex: 1; min-height: 0; overflow: hidden; border-left: 1px solid #777; background-color: #d3d0c9; background-image: linear-gradient(90deg, #b0aea8 1px, transparent 1px), linear-gradient(#b0aea8 1px, transparent 1px); background-size: 150px 50px; background-position: 125px 39px; }
.wires { position: absolute; left: 0; top: 0; }
.wire { stroke: #50504e; stroke-width: 3; }
.wire.twin { stroke-width: 5; }
.wire.core { stroke: #c9c6bf; stroke-width: 1; }
.live.twin { stroke: #86d82e; stroke-width: 5; }
.live.core { stroke: #c8dcae; stroke-width: 1; }
.ports { fill: #fff; stroke: #111; stroke-width: 2; }
.node { position: absolute; display: flex; align-items: center; justify-content: space-between; border: 1px solid #222; border-radius: 4px; box-shadow: 0 1px 1px #0004; }
.col { display: flex; flex-direction: column; line-height: 20px; text-align: center; }
.violet { background: linear-gradient(#e4e4e6, #c5c5c9 8%, #aaaaae 35%, #9694a4 36%, #9694a8 82%, #8e8e92 84%); }
.plain { background: linear-gradient(#ebebeb 34%, #d0cec8 36%); }
.toggle { width: 105px; height: 23px; padding-right: 1px; font-size: 12px; background: linear-gradient(#e0e0e4, #b8b8bc 45%, #9896a6 50%); }
.toggle span { flex: 1; text-align: center; line-height: 17px; }
.toggle button { width: 48px; height: 20px; border: 1px solid #111; background: linear-gradient(#4c4c4a 45%, #2b2b2b 50%); color: #fff; font: 700 13px/17px "Liberation Mono", monospace; outline: 1px solid #999; outline-offset: -2px; }
.t1 { left: 65px; top: 47px; }
.t2 { left: 82px; top: 91px; }
.explode { left: 124px; top: 152px; width: 82px; height: 45px; padding: 0 11px 4px 22px; }
.redo { position: absolute; left: 3px; top: 4px; width: 14px; height: 14px; background: #ebebeb; border: 1px solid #555; border-radius: 2px; display: grid; place-items: center; }
.item { left: 277px; top: 112px; width: 80px; height: 65px; padding: 0 9px 2px 8px; background: linear-gradient(#ebebeb 22%, #d0cec8 23%); }
.panel { display: block; left: 413px; top: 46px; width: 161px; height: 101px; background: linear-gradient(90deg, transparent 13px, #d8cc50 13px, #d8cc50 14px, transparent 14px), #fff75a; font: 10px "DejaVu Sans Mono", monospace; }
.panel header { height: 18px; padding-right: 12px; border-radius: 3px 3px 0 0; background: linear-gradient(90deg, transparent 13px, #a8a43c 13px, #a8a43c 14px, transparent 14px), #d5d04c; text-align: right; line-height: 20px; }
.panel p { display: flex; gap: 6px; padding: 4px; line-height: 12px; }
.python { left: 449px; top: 170px; width: 93px; height: 45px; padding: 0 9px 2px 7px; }
.timer { position: absolute; left: 449px; top: 215px; width: 93px; height: 16px; border: 1px solid #222; background: linear-gradient(#d0d4b8 45%, #a8aa9c 50%); text-align: center; line-height: 13px; }
.timer::before { content: ""; position: absolute; left: 41px; top: -5px; border: 5px solid transparent; border-top: 0; border-bottom-color: #d0d4b8; }
.param { width: 51px; height: 25px; justify-content: center; }
.spiral-node { left: 142px; top: 243px; background: linear-gradient(#b8f07c, #a5e468 40%, #78cc38 45%, #84d838); }
.curve-node { left: 498px; top: 386px; background: linear-gradient(#ebebeb 40%, #d0cec8 45%); }
.fillet { left: 644px; top: 204px; width: 66px; height: 29px; padding-left: 6px; justify-content: flex-start; gap: 10px; }
.slider { height: 21px; align-items: stretch; }
.slider .name { text-align: center; line-height: 17px; font-size: 12px; border-right: 1px solid #222; border-radius: 3px 0 0 3px; background: linear-gradient(#c8c8cc, #9896a6 50%); }
.slider div { flex: 1; display: flex; align-items: center; border-radius: 0 3px 3px 0; background: linear-gradient(#ebebeb 45%, #d6d4ce 50%); line-height: 17px; }
.slider div span { font-size: 12px; }
.slider i { width: 9px; height: 9px; border: 2px solid #111; border-radius: 50%; background: #fff; margin-right: 3px; }
.slider em { flex: 1; height: 1px; background: #b4b2ac; margin: 1px 8px 0 2px; }
.bee { left: 546px; top: 266px; width: 170px; }
.bee .name { width: 20px; }
.bee i { margin-left: 5px; }
.times { left: 200px; top: 388px; width: 162px; }
.times .name { width: 41px; }
.times div::before { content: ""; width: 27px; height: 1px; margin: 1px 0 0 8px; background: #b4b2ac; }
.warn { left: 278px; top: 289px; width: 66px; height: 45px; padding: 0 10px 4px 7px; border-color: #4c1408; background: linear-gradient(#ffd09a, #ffc080 12%, #ffa833 15%, #ffa025 50%, #fc9417 52%); }
.balloon { position: absolute; left: 326px; top: 274px; width: 18px; height: 15px; border: 1px solid #a8680c; border-radius: 2px; background: linear-gradient(#fff0a0, #ffd84c 45%, #f5a31a 50%); }
.balloon::after { content: ""; position: absolute; left: 5px; top: 13px; border: 3px solid transparent; border-bottom: 0; border-top-color: #f5a31a; }
.hand { left: 404px; top: 366px; width: 64px; height: 65px; padding: 0 10px 2px 7px; }
.palette { position: absolute; left: 0; bottom: 0; width: 63px; height: 28px; border: 1px solid #111; border-left: 0; background: linear-gradient(110deg, #eee 60%, #999); display: flex; align-items: center; gap: 3px; padding-left: 1px; }
.gh-status { flex: none; height: 26px; border-top: 1px solid #aaa; display: flex; align-items: center; gap: 4px; padding: 2px 0 0 3px; white-space: nowrap; }
.under { flex: none; height: 3px; background: #2b2b2b; }
.under i { display: block; width: 25%; height: 3px; background: #a9b8cc; }

/* Taskbar */
.taskbar { flex: none; height: 27px; display: flex; align-items: center; gap: 17px; padding-left: 6px; background: #181818; color: #ebebeb; }
.taskbar button { width: 20px; height: 20px; margin-top: 2px; }
.taskbar button svg { display: block; width: 20px; height: 20px; }
.tray { margin-left: auto; display: flex; align-items: center; gap: 10px; padding: 2px 22px 0 0; }
.note { margin-left: 8px; }
```

FILE: growth.js
```js
// Grows one closed curve inside a quarter of the rounded outline; the page mirrors it.
(function () {
  const A = 89, B = 86, R = 4.6, REST = 1.5, LIMIT = 1250, STEPS = 1300;
  let seed = 29;
  const rand = () => (seed = (seed * 16807) % 2147483647) / 2147483647;
  let pts = [];
  for (let x = 2; x < 70; x += 2) pts.push([x, 2 + rand()]);
  for (let t = 0; t <= 1; t += 0.03) {
    const a = t * Math.PI / 2, r = 55 + 14 * Math.cos(a * 8) + 2 * rand();
    pts.push([2 + r * Math.cos(a), 2 + r * Math.sin(a)]);
  }
  for (let y = 68; y > 2; y -= 2) pts.push([2 + rand(), y]);
  for (let step = 0; step < STEPS; step++) {
    const n = pts.length, cells = new Map(), jitter = step < STEPS * 0.8 ? 0.25 : 0;
    pts.forEach((p, i) => {
      const k = Math.floor(p[0] / R) * 100 + Math.floor(p[1] / R);
      if (!cells.has(k)) cells.set(k, []);
      cells.get(k).push(i);
    });
    const next = pts.map((p, i) => {
      const a = pts[(i + n - 1) % n], b = pts[(i + 1) % n];
      let fx = ((a[0] + b[0]) / 2 - p[0]) * 0.16 + (rand() - 0.5) * jitter;
      let fy = ((a[1] + b[1]) / 2 - p[1]) * 0.16 + (rand() - 0.5) * jitter;
      for (const q of [a, b]) {
        const dx = q[0] - p[0], dy = q[1] - p[1], d = Math.hypot(dx, dy) || 0.01, f = (d - REST) * 0.2 / d;
        fx += dx * f; fy += dy * f;
      }
      const cx = Math.floor(p[0] / R), cy = Math.floor(p[1] / R);
      for (let u = cx - 1; u <= cx + 1; u++) for (let v = cy - 1; v <= cy + 1; v++) {
        const cell = cells.get(u * 100 + v);
        if (!cell) continue;
        for (const j of cell) {
          const gap = Math.abs(i - j);
          if (gap < 3 || n - gap < 3) continue;
          const dx = p[0] - pts[j][0], dy = p[1] - pts[j][1], d = Math.hypot(dx, dy) || 0.01;
          if (d < R) { const f = (R - d) / R * 0.55 / d; fx += dx * f; fy += dy * f; }
        }
      }
      const m = Math.hypot(fx, fy), s = m > 0.4 ? 0.4 / m : 1;
      let x = Math.max(2, p[0] + fx * s), y = Math.max(2, p[1] + fy * s);
      const out = Math.cbrt((x / A) ** 3 + (y / B) ** 3);
      if (out > 1) { x /= out; y /= out; }
      return [x, y];
    });
    pts = [];
    next.forEach((p, i) => {
      pts.push(p);
      const q = next[(i + 1) % n], d = Math.hypot(q[0] - p[0], q[1] - p[1]);
      if (n < LIMIT && (d > 2.6 || (d > 1 && rand() < 0.008))) pts.push([(p[0] + q[0]) / 2, (p[1] + q[1]) / 2]);
    });
  }
  const mid = (p, q) => ((p[0] + q[0]) / 2).toFixed(2) + " " + ((p[1] + q[1]) / 2).toFixed(2);
  let d = "M" + mid(pts[pts.length - 1], pts[0]);
  pts.forEach((p, i) => { d += "Q" + p[0].toFixed(2) + " " + p[1].toFixed(2) + " " + mid(p, pts[(i + 1) % pts.length]); });
  document.getElementById("quarter").setAttribute("d", d + "Z");
})();
```
